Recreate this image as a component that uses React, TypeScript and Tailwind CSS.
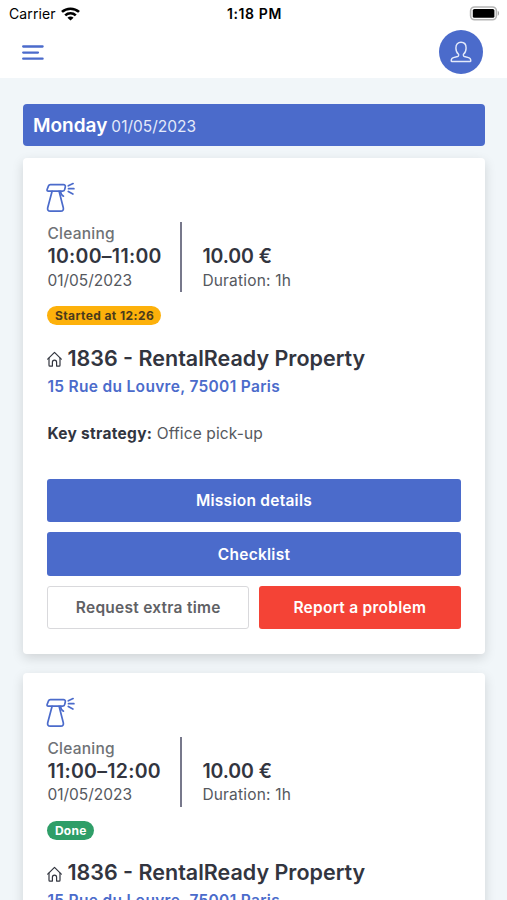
import type { ReactNode } from "react";

type Mission = {
  id: number;
  time: string;
  date: string;
  price: string;
  duration: string;
  status: "started" | "done";
  statusLabel: string;
};

const missions: Mission[] = [
  {
    id: 1,
    time: "10:00–11:00",
    date: "01/05/2023",
    price: "10.00 €",
    duration: "1h",
    status: "started",
    statusLabel: "Started at 12:26",
  },
  {
    id: 2,
    time: "11:00–12:00",
    date: "01/05/2023",
    price: "10.00 €",
    duration: "1h",
    status: "done",
    statusLabel: "Done",
  },
];

function WifiIcon() {
  return (
    <svg width="19" height="14" viewBox="0 0 18 14" preserveAspectRatio="none" fill="none" stroke="#000" strokeWidth="2.5">
      <path d="M.9 4.9C5.4.6 12.6.6 17.1 4.9" />
      <path d="M4 8.3c2.8-2.7 7.2-2.7 10 0" />
      <path d="M9 13.6 6.1 10.7c1.6-1.5 4.2-1.5 5.8 0z" fill="#000" stroke="none" />
    </svg>
  );
}

function BatteryIcon() {
  return (
    <svg width="31" height="15" viewBox="0 0 31 15" fill="none">
      <rect x="1.6" y="1" width="25.8" height="12.8" rx="4" fill="#fff" stroke="#b5b5b5" strokeWidth="1.6" />
      <rect x="3.8" y="3" width="21.6" height="8.8" rx="1.6" fill="#000" />
      <path d="M28.8 5.1c1.7.5 1.7 4.1 0 4.6z" fill="#a6a6a6" />
    </svg>
  );
}

function UserIcon() {
  return (
    <svg width="22" height="22" viewBox="0 0 22 22" fill="none" stroke="#e4eafa" strokeWidth="1.4" strokeLinejoin="round">
      <path d="M8.6 13.2C6.8 11.9 5.9 9.6 5.9 6.9 5.9 3.4 7.9 1.3 11 1.3s5.1 2.1 5.1 5.6c0 2.7-.9 5-2.7 6.3v1.2c0 .6.4.9 1 1.1l4.1 1.2c1.6.5 2.3 1.4 2.3 3 0 .5-.3.8-.8.8H2c-.5 0-.8-.3-.8-.8 0-1.6.7-2.5 2.3-3l4.1-1.2c.6-.2 1-.5 1-1.1z" />
    </svg>
  );
}

function SprayIcon() {
  return (
    <svg
      width="29"
      height="31"
      viewBox="0.9 0.3 29 31"
      fill="none"
      stroke="#4b6bcb"
      strokeWidth="1.7"
      strokeLinecap="round"
      strokeLinejoin="round"
      className="overflow-visible"
    >
      <path d="M4.3 2.9h13c1.4 0 2.2 1 1.9 2.2l-.5 2.4c-.2 1.2-1 1.9-2.1 1.9H2.2c-1 0-1.5-.7-1.2-1.6l1.4-3.6c.3-.8.9-1.3 1.9-1.3z" />
      <path d="M6 9.6 1.6 26.1c-.5 1.9.5 3.4 2.5 3.4h10.6c2 0 3-1.5 2.5-3.4L13 9.6" />
      <path d="M14.4 9.6c.2 2.2 1.2 3.9 3 4.9" />
      <path d="m22.2 4.1 4.8-2.2M22.4 7h5.4M22.2 9.8l4.6 2.5" />
    </svg>
  );
}

function HomeIcon() {
  return (
    <svg width="15" height="16" viewBox="0 0 15 16" fill="none" stroke="#32353f" strokeWidth="1.2" strokeLinejoin="round" strokeLinecap="round">
      <path d="M.7 8.2 7.5 1.4l6.8 6.8" />
      <path d="M2 7.2v7c0 .6.3.9.9.9h2.5v-3.8c0-1.3.8-2.1 2.1-2.1s2.1.8 2.1 2.1v3.8h2.5c.6 0 .9-.3.9-.9v-7" />
    </svg>
  );
}

function Button({ className, children }: { className: string; children: ReactNode }) {
  return (
    <button
      type="button"
      className={`h-[43.5px] w-full rounded-[3px] pt-px text-[15.5px] font-semibold tracking-[0.26px] ${className}`}
    >
      {children}
    </button>
  );
}

function MissionCard({ mission }: { mission: Mission }) {
  return (
    <article className="rounded-[4px] bg-white px-[24.4px] pt-6 pb-[24.5px] shadow-[0_4px_12px_rgba(0,0,0,0.14)]">
      <SprayIcon />
      <div className="mt-[9px] flex h-[70px] leading-[23.3px]">
        <div className="w-[135px] border-r-2 border-[#77788b] whitespace-nowrap">
          <p className="text-[15.5px] font-medium tracking-[0.25px] text-[#6f7276]">Cleaning</p>
          <p className="text-[19.5px] font-semibold tracking-[0.28px]">{mission.time}</p>
          <p className="text-[15.5px] text-[#55585e]">{mission.date}</p>
        </div>
        <div className="flex flex-col justify-end pl-5">
          <p className="text-[19.5px] font-semibold tracking-[-0.1px]">{mission.price}</p>
          <p className="text-[15.5px] tracking-[0.18px] text-[#55585e]">Duration: {mission.duration}</p>
        </div>
      </div>
      <div className="mt-[14px] flex">
        <span
          className={`h-[19px] rounded-full pr-[7px] pl-[7.5px] text-[12px] leading-[19px] font-bold ${
            mission.status === "started"
              ? "bg-[#fdb10b] tracking-[0.42px] text-[#4a3a1c]"
              : "bg-[#2f9e68] tracking-[0.25px] text-white"
          }`}
        >
          {mission.statusLabel}
        </span>
      </div>
      <h2 className="mt-[18.5px] flex h-7 items-center text-[21.5px] leading-7 font-semibold whitespace-nowrap">
        <span className="mt-[3px] mr-[5px]">
          <HomeIcon />
        </span>
        1836 - RentalReady Property
      </h2>
      <p className="mt-[3px] text-[15.5px] leading-6 font-semibold tracking-[0.32px] text-[#4b6bcb]">
        15 Rue du Louvre, 75001 Paris
      </p>
      <p className="mt-[23px] text-[15.5px] leading-6 tracking-[0.12px] text-[#55585e]">
        <strong className="font-bold tracking-[0.3px] text-[#32353f]">Key strategy:</strong> Office pick-up
      </p>
      <div className="mt-[33px] grid grid-cols-2 gap-[10px]">
        <div className="col-span-2">
          <Button className="bg-[#4b6bcb] text-white">Mission details</Button>
        </div>
        <div className="col-span-2">
          <Button className="bg-[#4b6bcb] text-white">Checklist</Button>
        </div>
        <Button className="border-[1.5px] border-[#d9d9dc] bg-white text-[#5f6165]">Request extra time</Button>
        <Button className="bg-[#f44336] text-white">Report a problem</Button>
      </div>
    </article>
  );
}

export default function App() {
  return (
    <div className="h-[900px] w-[507px] overflow-hidden bg-[#f1f6f9] font-['Inter',sans-serif] text-[#32353f]">
      <header className="h-[78px] bg-white">
        <div className="grid h-7 grid-cols-3 items-center pr-[7px] pl-[9px] text-[14px] text-black">
          <div className="flex items-center gap-[5px] pb-px">
            <span className="tracking-[0.1px]">Carrier</span>
            <WifiIcon />
          </div>
          <span className="pb-px text-center font-semibold tracking-[0.6px]">1:18 PM</span>
          <div className="flex justify-end pb-[2px]">
            <BatteryIcon />
          </div>
        </div>
        <div className="flex h-12 items-center justify-between pr-[24.5px] pl-[22px]">
          <button type="button" aria-label="Menu">
            <svg width="22" height="17" viewBox="0 0 22 17" stroke="#4b6bcb" strokeWidth="2.3" strokeLinecap="round">
              <path d="M1.2 2.5h19.4M1.2 8.6h14.8M1.2 14.7h19.4" />
            </svg>
          </button>
          <button type="button" aria-label="Profile" className="flex size-11 items-center justify-center rounded-full bg-[#4b6bcb]">
            <UserIcon />
          </button>
        </div>
      </header>
      <main className="pt-[26px] pr-[22px] pl-[23px]">
        <div className="flex h-[42px] items-baseline rounded-[4px] bg-[#4b6bcb] px-[10px] leading-[43.5px] text-white">
          <span className="text-[19px] font-semibold">Monday</span>
          <span className="ml-1 text-[15.5px] text-[#e4eafa]">01/05/2023</span>
        </div>
        <div className="mt-3 flex flex-col gap-[19px]">
          {missions.map((mission) => (
            <MissionCard key={mission.id} mission={mission} />
          ))}
        </div>
      </main>
    </div>
  );
}
